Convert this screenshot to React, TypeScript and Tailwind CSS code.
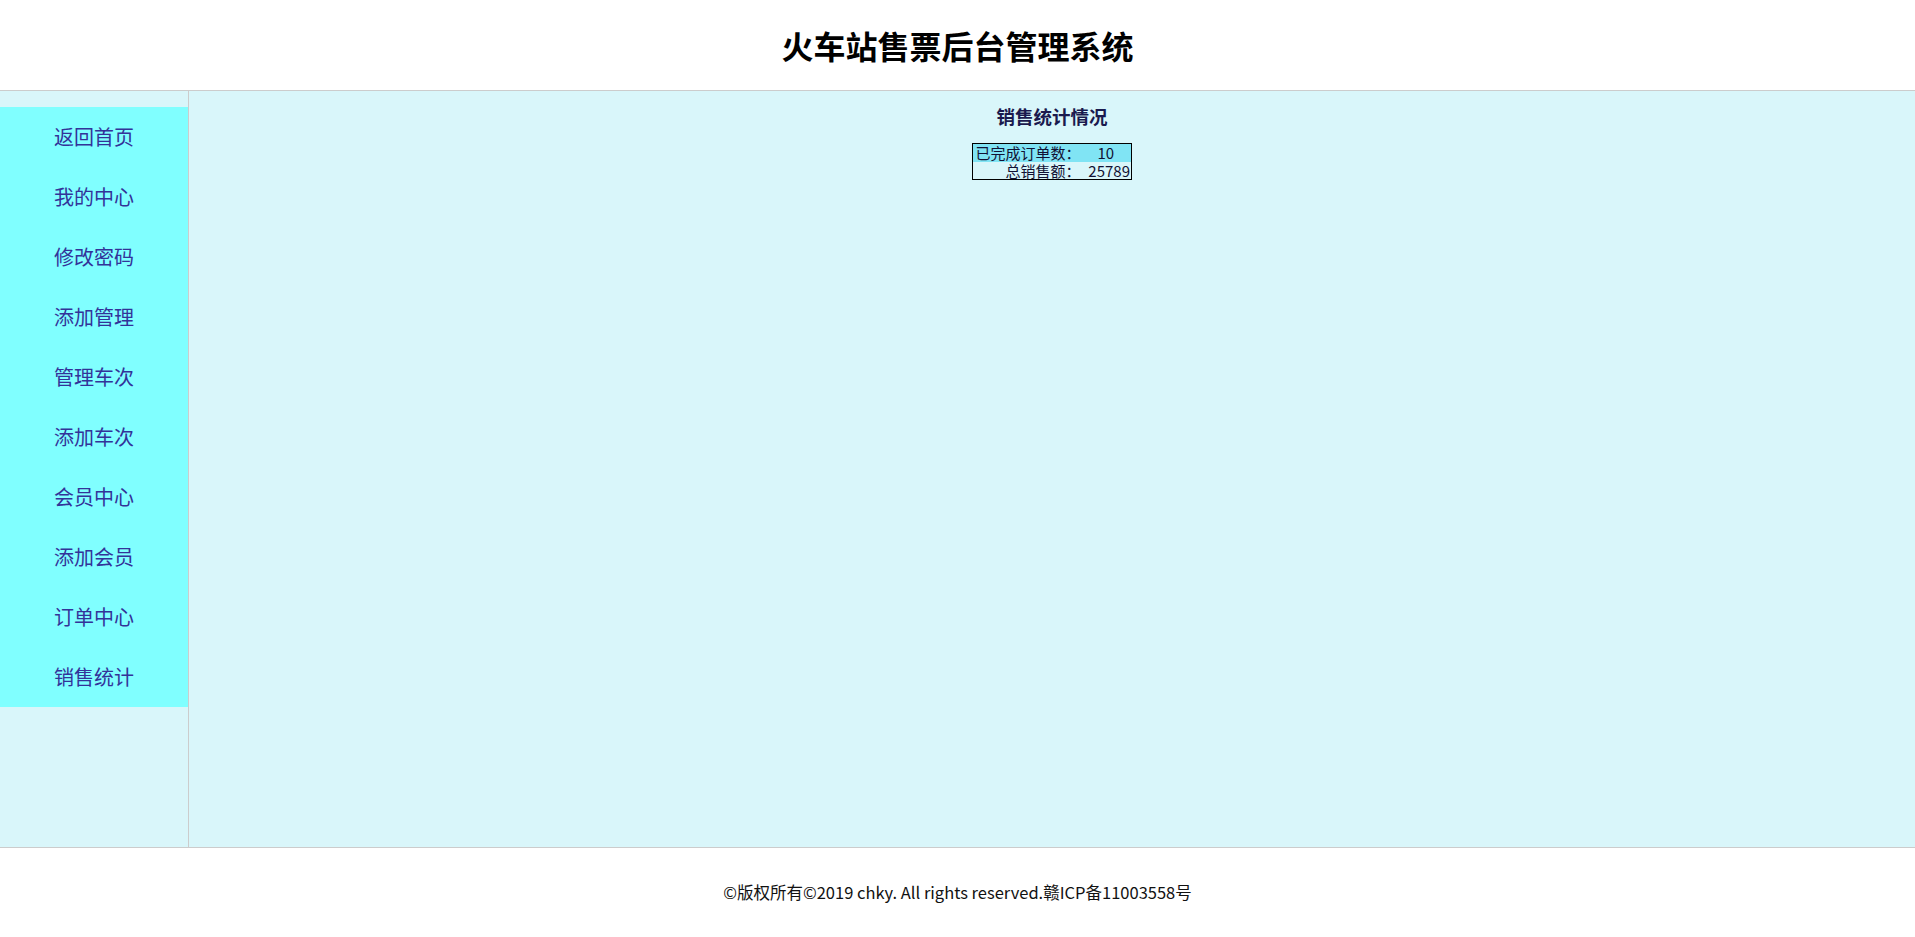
import React from 'react';

const menu = ['返回首页', '我的中心', '修改密码', '添加管理', '管理车次', '添加车次', '会员中心', '添加会员', '订单中心', '销售统计'];

const App: React.FC = () => {
	return (
		<div className="min-h-[937px] bg-white font-['Noto_Sans_CJK_SC',sans-serif]">
			<div className="h-[91px] border-b border-[#cccccc] flex items-center justify-center">
				<h1 className="text-[32px] font-bold text-black leading-none">火车站售票后台管理系统</h1>
			</div>
			<div className="h-[757px] flex border-b border-[#cccccc] bg-[#d9f6fa]">
				<div className="w-[189px] border-r border-[#cccccc] pt-4">
					<ul className="bg-[#80ffff]">
						{menu.map((item) => (
							<li key={item} className="h-[60px] flex items-center justify-center text-[20px] text-[#333399]">
								{item}
							</li>
						))}
					</ul>
				</div>
				<div className="flex-1 flex flex-col items-center pt-[11px]">
					<h3 className="text-[18.5px] font-bold text-[#1a1a4e] leading-[28px]">销售统计情况</h3>
					<table className="mt-[13px] border border-black border-collapse text-[15px] leading-[17.5px] text-[#111133]">
						<tbody>
							<tr className="bg-[#80e4f4]">
								<td className="w-[108px] text-right p-0">已完成订单数：</td>
								<td className="w-[51px] text-center p-0">10</td>
							</tr>
							<tr>
								<td className="text-right p-0">总销售额：</td>
								<td className="text-right p-0 pr-[1px]">25789</td>
							</tr>
						</tbody>
					</table>
				</div>
			</div>
			<div className="h-[89px] flex items-center justify-center">
				<p className="text-[16.5px] text-[#111111]">©版权所有©2019 chky. All rights reserved.赣ICP备11003558号</p>
			</div>
		</div>
	);
};

export default App;
